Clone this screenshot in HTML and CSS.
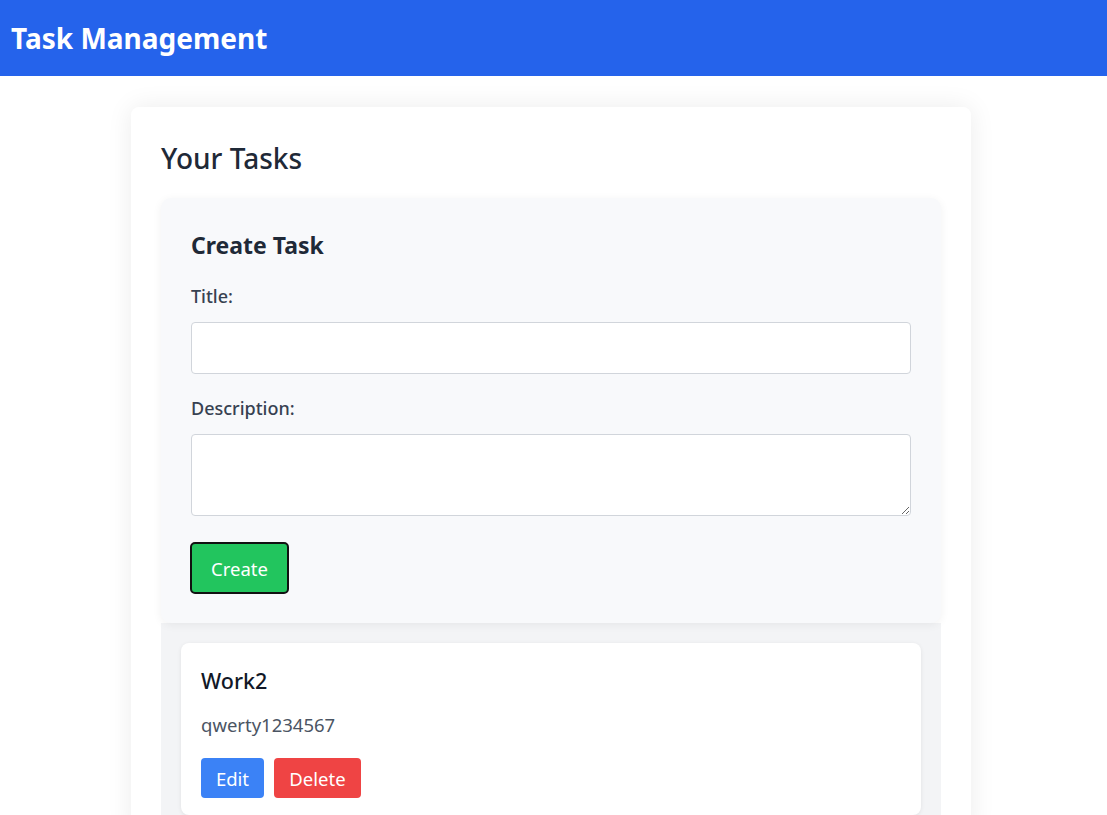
FILE: index.html
```html
<!DOCTYPE html>
<html>
<head>
<meta charset="utf-8">
<link rel="stylesheet" href="styles.css">
</head>
<body>
<header class="topbar">
  <h1 class="brand">Task Management</h1>
</header>
<main class="page">
  <section class="panel">
    <h2 class="panel-title">Your Tasks</h2>
    <form class="create-card">
      <h3 class="create-title">Create Task</h3>
      <label class="field-label">Title:</label>
      <input class="field-input" type="text">
      <label class="field-label">Description:</label>
      <textarea class="field-area"></textarea>
      <div class="form-actions">
        <button type="button" class="btn btn-create">Create</button>
      </div>
    </form>
    <div class="task-list">
      <div class="task-card">
        <h4 class="task-title">Work2</h4>
        <p class="task-desc">qwerty1234567</p>
        <div class="task-actions">
          <button type="button" class="btn btn-edit">Edit</button>
          <button type="button" class="btn btn-delete">Delete</button>
        </div>
      </div>
    </div>
  </section>
</main>
</body>
</html>
```
FILE: styles.css
```css
* { box-sizing: border-box; }
html, body { margin: 0; padding: 0; }
body {
  font-family: "Noto Sans", "Open Sans", sans-serif;
  color: #1f2937;
  background: #ffffff;
  overflow: hidden;
}
.topbar {
  background: #2563eb;
  height: 76px;
  display: flex;
  align-items: center;
  padding: 0 11px;
}
.brand {
  margin: 0;
  color: #ffffff;
  font-size: 28px;
  font-weight: 700;
  line-height: 1;
}
.page {
  display: flex;
  justify-content: center;
  padding-top: 31px;
  padding-right: 5px;
}
.panel {
  width: 840px;
  background: #ffffff;
  border-radius: 8px;
  box-shadow: 0 0 26px rgba(0, 0, 0, 0.08);
  padding: 32px 30px 0;
}
.panel-title {
  margin: 0 0 21px;
  font-size: 28px;
  font-weight: 500;
  line-height: 38px;
  color: #1f2937;
}
.create-card {
  background: #f8f9fb;
  border-radius: 10px;
  box-shadow: 0 2px 10px rgba(0, 0, 0, 0.06);
  padding: 32px 30px 29px;
  display: flex;
  flex-direction: column;
  position: relative;
  z-index: 1;
}
.create-title {
  margin: 0 0 23px;
  font-size: 23px;
  font-weight: 700;
  line-height: 30px;
  color: #1f2937;
}
.field-label {
  font-size: 18px;
  font-weight: 500;
  color: #374151;
  line-height: 26px;
  margin-bottom: 13px;
}
.field-input, .field-area {
  width: 100%;
  border: 1px solid #d1d5db;
  border-radius: 4px;
  background: #ffffff;
  font: inherit;
  margin: 0 0 21px;
}
.field-input { height: 52px; }
.field-area { height: 82px; resize: vertical; margin-bottom: 26px; }
.form-actions { display: flex; }
.btn {
  font-family: inherit;
  font-size: 18.5px;
  color: #ffffff;
  border: none;
  border-radius: 4px;
  cursor: pointer;
}
.btn-create {
  background: #22c55e;
  border: 2px solid #111111;
  border-radius: 5px;
  width: 99px;
  height: 52px;
  margin-left: -1px;
}
.task-list {
  background: #f3f4f6;
  padding: 20px 20px 20px;
}
.task-card {
  background: #ffffff;
  border-radius: 8px;
  box-shadow: 0 1px 4px rgba(0, 0, 0, 0.08);
  padding: 23px 20px 17px;
}
.task-title {
  margin: 0 0 16px;
  font-size: 21.5px;
  font-weight: 500;
  line-height: 30px;
  color: #111827;
}
.task-desc {
  margin: 0 0 20px;
  font-size: 18.5px;
  line-height: 26px;
  color: #4b5563;
}
.task-actions { display: flex; gap: 10px; }
.btn-edit { background: #3b82f6; height: 40px; width: 63px; }
.btn-delete { background: #ef4444; height: 40px; width: 87px; }
```
